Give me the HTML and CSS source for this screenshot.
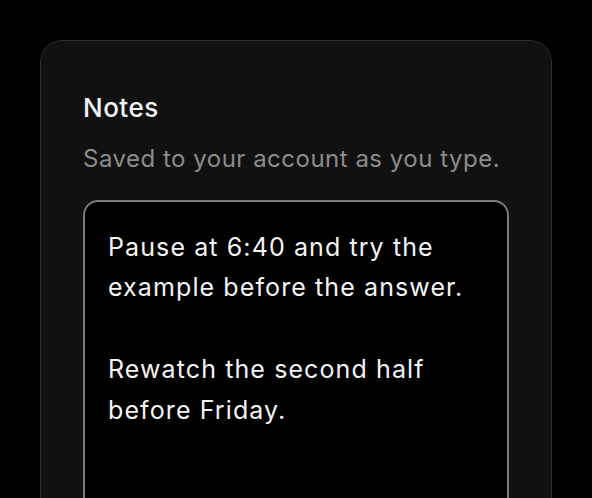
FILE: index.html
```html
<!DOCTYPE html>
<html lang="en">
<head>
<meta charset="utf-8">
<title>Notes</title>
<link rel="stylesheet" href="styles.css">
</head>
<body>
<main class="page">
  <section class="card">
    <h2 class="card-title">Notes</h2>
    <p class="card-sub">Saved to your account as you type.</p>
    <div class="notes-box">
      <p class="note-line">Pause at 6:40 and try the example before the answer.</p>
      <p class="note-line">Rewatch the second half before Friday.</p>
    </div>
  </section>
</main>
</body>
</html>
```

FILE: styles.css
```css
html, body {
  margin: 0;
  padding: 0;
  background: #000;
  height: 100%;
  overflow: hidden;
}
body {
  font-family: Inter, "Noto Sans", sans-serif;
  color: #f4f4f4;
}
.page {
  padding: 40px 40px 0;
}
.card {
  width: 512px;
  box-sizing: border-box;
  background: #111111;
  border: 1px solid #2e2e2e;
  border-radius: 22px;
  padding: 51px 42px 0;
  min-height: 600px;
}
.card-title {
  margin: 0;
  font-size: 26px;
  font-weight: 500;
  line-height: 32px;
  letter-spacing: 0.5px;
  color: #f4f4f4;
}
.card-sub {
  margin: 20px 0 0;
  font-size: 24px;
  line-height: 30px;
  letter-spacing: 0.5px;
  color: #8c8c8c;
}
.notes-box {
  margin-top: 26px;
  border: 2px solid #7a7a7a;
  border-radius: 15px;
  background: #000;
  padding: 24.5px 23px;
  min-height: 400px;
}
.note-line {
  margin: 0 0 40.75px;
  font-size: 25px;
  line-height: 40.75px;
  letter-spacing: 1.1px;
  color: #f4f4f4;
}
```
